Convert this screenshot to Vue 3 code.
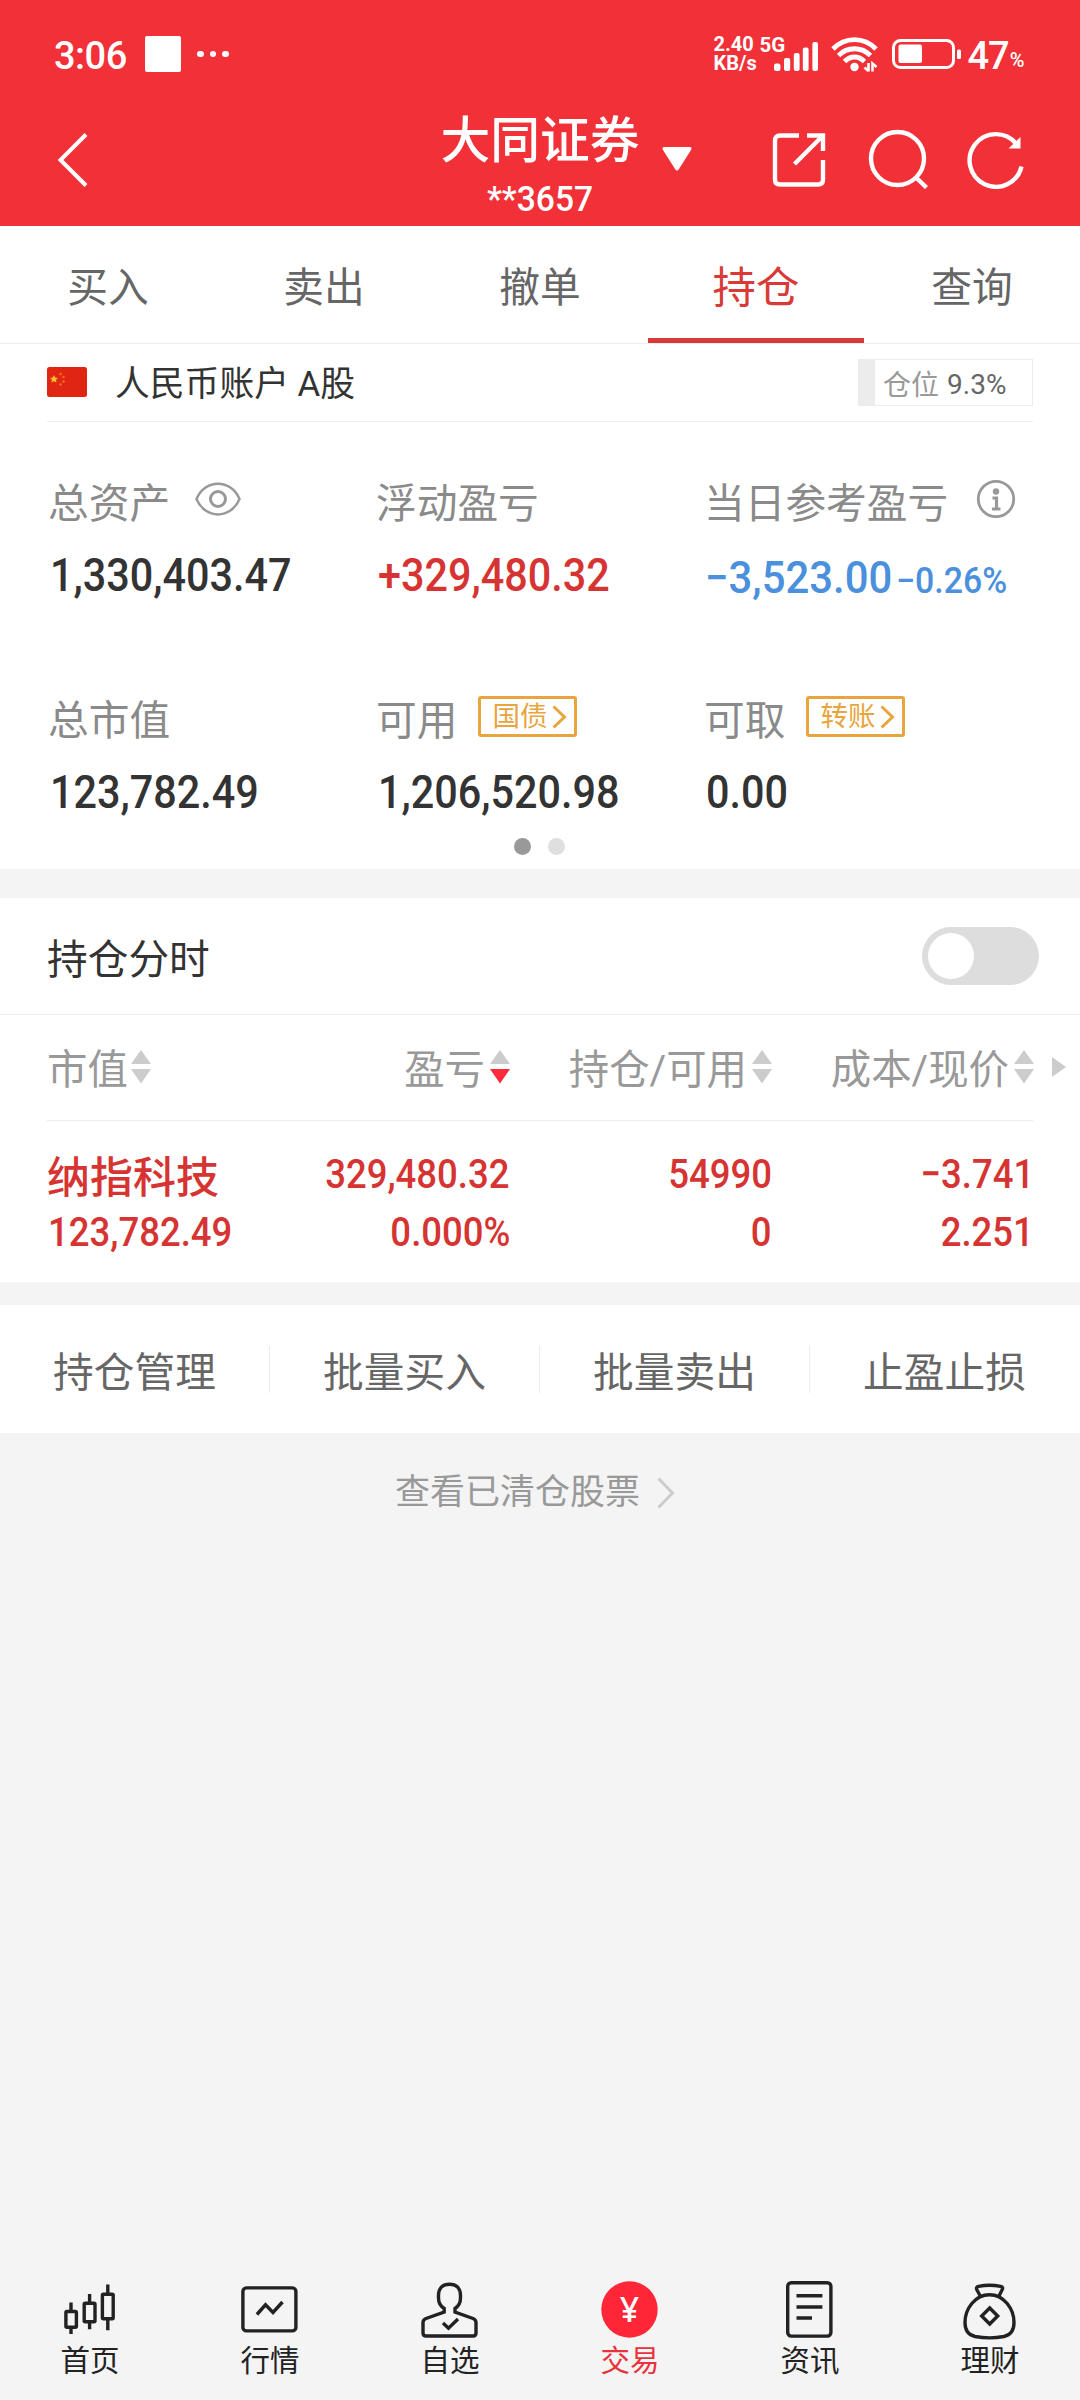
<template>
  <div class="page">
    <header class="header">
      <div class="status">
        <span class="time">3:06</span>
        <span class="square"></span>
        <span class="dots"><i></i><i></i><i></i></span>
        <div class="speed">
          <span>2.40</span>
          <span>KB/s</span>
        </div>
        <div class="signal">
          <span>5G</span>
          <svg width="46" height="30" viewBox="0 0 46 30" fill="#fff">
            <rect x="0" y="22.5" width="6.4" height="7.5" rx="2" />
            <rect x="10" y="17" width="6.2" height="13" rx="2" />
            <rect x="19.8" y="12" width="5.8" height="18" rx="2" />
            <rect x="28.8" y="6.5" width="5.8" height="23.5" rx="2" />
            <rect x="38.4" y="1" width="5.6" height="29" rx="2" />
          </svg>
        </div>
        <svg class="wifi" width="48" height="36" viewBox="0 0 48 36">
          <g fill="none" stroke="#fff" stroke-width="4.8">
            <path d="M2 13C14 0.500 33 0.500 45 13" />
            <path d="M7.500 19.500C16.500 10.500 30.500 10.500 39.500 19.500" />
            <path d="M13.500 25.500C19.500 19.500 27.500 19.500 33.500 25.500" />
          </g>
          <circle cx="23.500" cy="31" r="4.200" fill="#fff" />
          <path d="M37.500 27v8.500M33.500 31.500l4 3.500M41.500 35.500v-8l4 3.500" fill="none" stroke="#fff" stroke-width="2.600" />
        </svg>
        <svg class="battery" width="70" height="30" viewBox="0 0 70 30">
          <rect x="1.500" y="1.500" width="60" height="27" rx="7" fill="none" stroke="#fff" stroke-width="3" />
          <rect x="6.500" y="5.500" width="23.500" height="18.500" rx="2" fill="#fff" />
          <rect x="65" y="10.500" width="4" height="9.500" rx="1.500" fill="#fff" />
        </svg>
        <span class="level">47</span>
        <span class="percent">%</span>
      </div>
      <div class="nav">
        <svg class="back" width="32" height="56" viewBox="0 0 32 56" fill="none" stroke="#fff" stroke-width="4">
          <path d="M29 2.500L3.500 28L29 53.500" />
        </svg>
        <div class="broker">
          <div class="broker-name">{{ broker.name }}</div>
          <div class="broker-no">{{ broker.account }}</div>
        </div>
        <svg class="caret" width="30" height="24" viewBox="0 0 30 24">
          <path d="M2.500 0h25q3 0 1.500 3L17 22q-2 3-4 0L1 3Q-.5 0 2.500 0z" fill="#fff" />
        </svg>
        <svg class="share" width="56" height="56" viewBox="0 0 56 56" fill="none" stroke="#fff" stroke-width="4.400">
          <path d="M28 3.500H9Q4 3.500 4 8.500V47.500Q4 52.500 9 52.500H47Q52 52.500 52 47.500V28" />
          <path d="M36 3.500H52V19M52 3.500L23.500 32" />
        </svg>
        <svg class="search" width="60" height="60" viewBox="0 0 60 60" fill="none" stroke="#fff" stroke-width="4.400">
          <circle cx="29.500" cy="29.500" r="26.500" />
          <path d="M47 47.500L58.500 58.500" />
        </svg>
        <svg class="refresh" width="58" height="58" viewBox="0 0 58 58">
          <path d="M54.500 35.500A26.300 26.300 0 1 1 49 12.500" fill="none" stroke="#fff" stroke-width="4.400" />
          <path d="M53.500 6v11.500H41.500z" fill="#fff" />
        </svg>
      </div>
    </header>

    <nav class="tabs">
      <div v-for="tab in tabs" :key="tab" class="tab" :class="{ active: tab === activeTab }" @click="activeTab = tab">{{ tab }}</div>
    </nav>

    <section class="assets">
      <div class="account">
        <svg class="flag" width="40" height="30" viewBox="0 0 40 30">
          <rect width="40" height="30" rx="2.500" fill="#e02512" />
          <path d="M7 8l1.200 2.600 2.800.3-2 1.900.5 2.800L7 14.200l-2.500 1.400.5-2.800-2-1.900 2.800-.3z" fill="#fbc02d" />
          <g fill="#f0702a">
            <circle cx="13.500" cy="7" r="1.200" />
            <circle cx="16.500" cy="10" r="1.200" />
            <circle cx="16.500" cy="14.500" r="1.200" />
            <circle cx="13.500" cy="17.500" r="1.200" />
          </g>
        </svg>
        <span class="account-name">人民币账户 A股</span>
        <div class="position">
          <span class="position-bar" :style="{ width: position + '%' }"></span>
          <span class="position-label">仓位</span>
          <span class="position-value">{{ position }}%</span>
        </div>
      </div>

      <div class="stats">
        <div v-for="item in stats" :key="item.label" class="stat">
          <div class="stat-label">
            <span>{{ item.label }}</span>
            <svg v-if="item.icon === 'eye'" class="eye" width="46" height="34" viewBox="0 0 46 34" fill="none" stroke="#999" stroke-width="2.500">
              <path d="M1.500 17C10-3.500 36-3.500 44.500 17C36 37.500 10 37.500 1.500 17z" />
              <circle cx="23" cy="17" r="7.500" stroke-width="3" />
            </svg>
            <svg v-if="item.icon === 'info'" class="info" width="40" height="40" viewBox="0 0 40 40">
              <circle cx="20" cy="20" r="17.700" fill="none" stroke="#999" stroke-width="2.800" />
              <circle cx="20" cy="12.500" r="3.200" fill="#999" />
              <path d="M16.500 19H20.500V30M16 30h8.500" fill="none" stroke="#999" stroke-width="3.200" />
            </svg>
            <span v-if="item.tag" class="tag">
              {{ item.tag }}
              <svg width="15" height="24" viewBox="0 0 15 24" fill="none" stroke="#e8a53e" stroke-width="3">
                <path d="M1.500 1.500L12.500 12L1.500 22.500" />
              </svg>
            </span>
          </div>
          <div class="stat-value" :class="item.color">
            <span class="num">{{ item.value }}</span>
            <span v-if="item.rate" class="rate">{{ item.rate }}</span>
          </div>
        </div>
      </div>
      <div class="pager"><i class="on"></i><i></i></div>
    </section>

    <section class="holdings">
      <div class="chart-row">
        <span>持仓分时</span>
        <span class="switch" :class="{ checked: showChart }" @click="showChart = !showChart"><i></i></span>
      </div>
      <div class="row head">
        <div v-for="col in columns" :key="col.name" class="cell">
          {{ col.name }}
          <svg width="20" height="34" viewBox="0 0 20 34">
            <path d="M10 0L20 14H0z" fill="#ccc" />
            <path d="M10 33.500L20 19H0z" :fill="col.sorted ? '#ff2a3b' : '#ccc'" />
          </svg>
        </div>
        <svg class="more" width="14" height="20" viewBox="0 0 14 20"><path d="M0 0L14 10L0 20z" fill="#ccc" /></svg>
      </div>
      <div class="line"></div>
      <div v-for="stock in stocks" :key="stock.name" class="row stock">
        <div class="cell">
          <span class="stock-name">{{ stock.name }}</span>
          <span class="num">{{ stock.market }}</span>
        </div>
        <div v-for="pair in stock.cells" :key="pair[0]" class="cell">
          <span class="num">{{ pair[0] }}</span>
          <span class="num">{{ pair[1] }}</span>
        </div>
      </div>
    </section>

    <section class="actions">
      <div v-for="action in actions" :key="action" class="action">{{ action }}</div>
    </section>

    <div class="cleared">
      <span>查看已清仓股票</span>
      <svg width="18" height="32" viewBox="0 0 18 32" fill="none" stroke="#ccc" stroke-width="3">
        <path d="M1.500 1.500L15.500 16L1.500 30.500" />
      </svg>
    </div>

    <footer class="tabbar">
      <div class="bar-item">
        <svg class="icon" viewBox="0 0 64 64">
          <rect x="7.900" y="31.500" width="10.500" height="15.700" rx="1" />
          <path d="M13 22.500V31M13 48V54" />
          <rect x="26.200" y="23.200" width="10.800" height="18.600" rx="1" />
          <path d="M31.600 14V23M31.600 42V49.300" />
          <rect x="44.400" y="14.200" width="10.800" height="24.600" rx="1" />
          <path d="M49.800 4.500V14M49.800 39V50.300" />
        </svg>
        <span>首页</span>
      </div>
      <div class="bar-item">
        <svg class="icon" viewBox="0 0 64 64">
          <rect x="4.900" y="7.900" width="53" height="43" rx="3.500" />
          <path d="M18.900 34.500L27.500 24.800L35 32.500L44.500 22" />
        </svg>
        <span>行情</span>
      </div>
      <div class="bar-item">
        <svg class="icon" viewBox="0 0 64 64">
          <path d="M26.200 28.500V32L8 38.500Q5 39.700 5 42.500V53Q5 56 8 56H55Q58 56 58 53V42.500Q58 39.700 55 38.500L37 32V28.500C40 26.500 42.500 23 42.500 18V15.500C42.500 8 38 4.200 31.500 4.200S20.500 8 20.500 15.500V18C20.500 23 23 26.500 26.200 28.500z" />
          <path d="M25 43L30.500 48.200L40 39" />
        </svg>
        <span>自选</span>
      </div>
      <div class="bar-item current">
        <svg class="icon" viewBox="0 0 64 64">
          <circle cx="31.500" cy="29.500" r="28.200" fill="#ff2637" stroke="none" />
          <text class="yen" x="31.500" y="42" text-anchor="middle">¥</text>
        </svg>
        <span>交易</span>
      </div>
      <div class="bar-item">
        <svg class="icon" viewBox="0 0 64 64">
          <rect x="9.700" y="2.700" width="43.200" height="53.400" rx="3.500" />
          <path d="M18.500 15.700H44.400M18.500 27H44.400M18.500 38H34" />
        </svg>
        <span>资讯</span>
      </div>
      <div class="bar-item">
        <svg class="icon" viewBox="0 0 64 64">
          <path d="M22.800 17L19 10Q17.500 7 20.500 6.300Q31.500 4.200 42.700 6.300Q45.700 7 44 10L40.500 17" />
          <path d="M31.500 14.700C17 14.700 7 29 7 42.500C7 50 10.500 55 17 56.500C26 58.200 37 58.200 46 56.500C52.500 55 56 50 56 42.500C56 29 46 14.700 31.500 14.700z" />
          <path d="M31.700 28L39.700 36L31.700 44L23.700 36z" />
        </svg>
        <span>理财</span>
      </div>
    </footer>
  </div>
</template>

<script setup>
  import { ref } from 'vue';

  const broker = { name: '大同证券', account: '**3657' };

  const tabs = ['买入', '卖出', '撤单', '持仓', '查询'];
  const activeTab = ref('持仓');
  const showChart = ref(false);
  const position = 9.3;

  const stats = [
    { label: '总资产', value: '1,330,403.47', icon: 'eye' },
    { label: '浮动盈亏', value: '+329,480.32', color: 'up' },
    { label: '当日参考盈亏', value: '−3,523.00', rate: '−0.26%', color: 'down', icon: 'info' },
    { label: '总市值', value: '123,782.49' },
    { label: '可用', value: '1,206,520.98', tag: '国债' },
    { label: '可取', value: '0.00', tag: '转账' },
  ];

  const columns = [
    { name: '市值' },
    { name: '盈亏', sorted: true },
    { name: '持仓/可用' },
    { name: '成本/现价' },
  ];

  const stocks = [
    {
      name: '纳指科技',
      market: '123,782.49',
      cells: [['329,480.32', '0.000%'], ['54990', '0'], ['−3.741', '2.251']],
    },
  ];

  const actions = ['持仓管理', '批量买入', '批量卖出', '止盈止损'];
</script>

<style>
  body {
    margin: 0;
    background: #f4f4f4;
  }
</style>

<style scoped>
  .page {
    display: flex;
    flex-direction: column;
    width: 1080px;
    height: 2400px;
    overflow: hidden;
    background: #f4f4f4;
    color: #333;
    font-family: Roboto, "Noto Sans CJK SC", sans-serif;
    font-size: 40.7px;
  }
  .page svg {
    display: block;
    flex: none;
  }
  .page > * {
    flex: none;
  }

  /* header */
  .header {
    height: 226px;
    background: #f23037;
    color: #fff;
  }
  .status {
    display: flex;
    align-items: center;
    height: 108px;
    padding-left: 54px;
    box-sizing: border-box;
  }
  .time {
    width: 91px;
    padding-top: 3px;
    font-size: 38px;
    font-weight: 500;
    letter-spacing: -0.5px;
  }
  .square {
    width: 36px;
    height: 36px;
    border-radius: 2px;
    background: #fff;
  }
  .dots {
    display: flex;
    gap: 6px;
    margin-left: 16px;
  }
  .dots i {
    width: 6.5px;
    height: 6.5px;
    border-radius: 50%;
    background: #fff;
  }
  .speed {
    display: flex;
    flex-direction: column;
    width: 46px;
    margin-left: 485px;
    font-size: 20px;
    font-weight: 700;
    line-height: 19.5px;
  }
  .signal {
    display: flex;
    flex-direction: column;
    width: 58px;
    height: 34px;
    margin-right: 13px;
    font-size: 20.5px;
    font-weight: 700;
    line-height: 17px;
  }
  .signal svg {
    margin: -13px 0 0 14px;
  }
  .wifi {
    margin-right: 13px;
  }
  .level {
    margin-left: 6px;
    padding-top: 3px;
    font-size: 38px;
    font-weight: 500;
    letter-spacing: -1px;
  }
  .percent {
    padding: 12px 0 0 1px;
    font-size: 20px;
    font-weight: 500;
  }
  .nav {
    display: flex;
    align-items: flex-start;
    height: 118px;
  }
  .back {
    margin: 24px 0 0 57px;
  }
  .broker {
    width: 202px;
    margin-left: 350px;
    text-align: center;
    white-space: nowrap;
  }
  .broker-name {
    padding-top: 1px;
    font-size: 49.8px;
    font-weight: 500;
    line-height: 64px;
  }
  .broker-no {
    margin-top: 8px;
    font-size: 35px;
    font-weight: 500;
    line-height: 38px;
    transform: scaleX(0.96);
  }
  .caret {
    margin: 39px 0 0 21px;
  }
  .share {
    margin: 24px 0 0 79px;
  }
  .search {
    margin: 21px 0 0 41px;
  }
  .refresh {
    margin: 23px 0 0 39px;
  }

  /* tabs */
  .tabs {
    display: flex;
    height: 117px;
    border-bottom: 1px solid #ececec;
    background: #fff;
  }
  .tab {
    flex: 1;
    box-sizing: border-box;
    border-bottom: 5px solid transparent;
    color: #666;
    line-height: 125px;
    text-align: center;
  }
  .tab.active {
    border-bottom-color: #d93a37;
    color: #d93a37;
    font-size: 43.5px;
  }

  /* assets */
  .assets {
    height: 525px;
    background: #fff;
  }
  .account {
    display: flex;
    align-items: center;
    height: 77px;
    margin: 0 47px;
    border-bottom: 1px solid #ececec;
  }
  .flag {
    margin-top: -1px;
  }
  .account-name {
    margin-left: 28px;
    font-size: 34.8px;
    line-height: 40px;
    padding-top: 3px;
    white-space: pre;
  }
  .position {
    display: flex;
    align-items: center;
    width: 175px;
    height: 47px;
    box-sizing: border-box;
    margin-left: auto;
    border: 1px solid #ececec;
    font-size: 28px;
    white-space: nowrap;
  }
  .position-bar {
    height: 100%;
    background: #ececec;
  }
  .position-label {
    margin-left: 8px;
    color: #999;
  }
  .position-value {
    margin-left: 8px;
    padding-top: 3px;
    color: #666;
  }
  .stats {
    display: grid;
    grid-template-columns: 328px 328px 376px;
    row-gap: 86px;
    padding: 52px 0 0 48px;
  }
  .stat-label {
    display: flex;
    align-items: center;
    height: 60px;
    color: #8a8a8a;
    line-height: 58px;
  }
  .eye {
    margin: -10px 0 0 25px;
  }
  .info {
    margin: -10px 0 0 28px;
  }
  .tag {
    display: flex;
    align-items: center;
    gap: 5px;
    width: 99px;
    height: 41px;
    box-sizing: border-box;
    margin: -9px 0 0 21px;
    padding-left: 11px;
    border: 3px solid #e8a53e;
    border-radius: 3px;
    color: #e8a53e;
    font-size: 27.5px;
    line-height: 37px;
  }
  .stat-value {
    display: flex;
    height: 60px;
    box-sizing: border-box;
    margin: 11px 0 0 2px;
    font-size: 47px;
    font-weight: 500;
    line-height: 60px;
    white-space: nowrap;
  }
  .num {
    transform: scaleX(0.88);
    transform-origin: left;
  }
  .up {
    color: #d63432;
  }
  .down {
    margin-left: 1px;
    padding-top: 3px;
    color: #4a90dc;
    font-size: 45px;
  }
  .down .num {
    transform: scaleX(0.93);
  }
  .rate {
    margin: 3px 0 0 -10px;
    font-size: 36px;
    transform: scaleX(0.94);
    transform-origin: left;
  }
  .pager {
    display: flex;
    justify-content: center;
    gap: 17px;
    margin-top: 16px;
    padding-right: 1px;
  }
  .pager i {
    width: 17px;
    height: 17px;
    border-radius: 50%;
    background: #dfdfdf;
  }
  .pager .on {
    background: #999;
  }

  /* holdings */
  .holdings {
    height: 384px;
    margin-top: 29px;
    background: #fff;
  }
  .chart-row {
    display: flex;
    align-items: center;
    justify-content: space-between;
    height: 116px;
    padding: 0 41px 0 47px;
    border-bottom: 1px solid #ececec;
  }
  .chart-row span:first-child {
    padding-top: 7px;
    line-height: 50px;
  }
  .switch {
    display: flex;
    width: 117px;
    height: 58px;
    box-sizing: border-box;
    padding: 6px;
    border-radius: 29px;
    background: #ddd;
  }
  .switch i {
    width: 46px;
    height: 46px;
    border-radius: 50%;
    background: #fff;
  }
  .switch.checked {
    justify-content: flex-end;
    background: #d93a37;
  }
  .row {
    display: grid;
    grid-template-columns: 200px 264px 262px 262px 30px;
    padding-left: 47px;
  }
  .head {
    align-items: center;
    height: 105px;
    color: #999;
    font-size: 40.4px;
  }
  .head .cell {
    display: flex;
    align-items: center;
    justify-content: flex-end;
    gap: 5px;
    padding: 7px 1px 0 0;
    line-height: 50px;
    white-space: nowrap;
  }
  .head .cell:first-child {
    justify-content: flex-start;
    gap: 3px;
  }
  .head .cell svg {
    margin-top: -8px;
  }
  .more {
    margin: -2px 0 0 17px;
  }
  .line {
    height: 1px;
    margin: 0 47px;
    background: #ececec;
  }
  .stock {
    padding-top: 24px;
    color: #d63432;
    font-size: 41.5px;
    font-weight: 500;
    line-height: 58px;
    white-space: nowrap;
  }
  .stock .cell {
    display: flex;
    flex-direction: column;
    align-items: flex-end;
    padding-right: 1px;
  }
  .stock .cell:first-child {
    align-items: flex-start;
  }
  .stock .num {
    transform-origin: right;
  }
  .stock .cell:first-child .num {
    margin-left: 1px;
    transform-origin: left;
  }
  .stock-name {
    height: 58px;
    font-size: 43px;
    line-height: 66px;
  }

  /* actions */
  .actions {
    display: flex;
    align-items: center;
    height: 128px;
    margin-top: 23px;
    background: #fff;
    color: #666;
  }
  .action {
    width: 269px;
    height: 47px;
    border-right: 1px solid #ececec;
    line-height: 55px;
    text-align: center;
  }
  .action:last-child {
    border-right: none;
  }
  .cleared {
    display: flex;
    align-items: center;
    justify-content: center;
    gap: 17px;
    height: 120px;
    padding-right: 10px;
    color: #999;
    font-size: 35px;
  }
  .cleared span {
    line-height: 40px;
  }

  /* bottom bar */
  .tabbar {
    display: flex;
    height: 120px;
    margin-top: auto;
    color: #222;
  }
  .bar-item {
    display: flex;
    flex: 1;
    flex-direction: column;
    align-items: center;
    font-size: 29.5px;
    line-height: 34px;
  }
  .bar-item.current {
    color: #e8323c;
  }
  .icon {
    width: 64px;
    height: 64px;
    fill: none;
    stroke: #222;
    stroke-width: 3.4;
  }
  .yen {
    fill: #fff;
    stroke: none;
    font-family: "Noto Sans", sans-serif;
    font-size: 34px;
    font-weight: 500;
  }
</style>
